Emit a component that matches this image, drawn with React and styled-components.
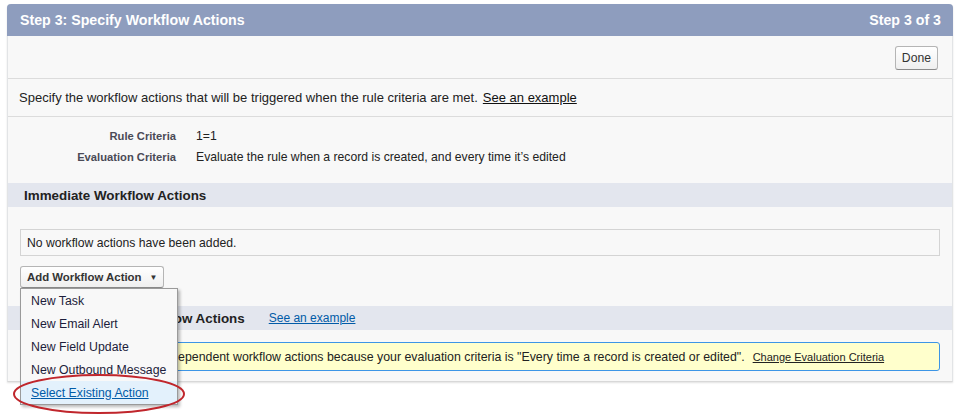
import React from "react";
import styled, { createGlobalStyle } from "styled-components";

const Global = createGlobalStyle`
  html, body { margin: 0; padding: 0; background: #fff; }
  body { font-family: "Liberation Sans", Arial, sans-serif; color: #222; }
`;

const Page = styled.div`
  min-height: 420px;
  box-sizing: border-box;
  padding: 4px 8px 0 7px;
`;

const Panel = styled.div`
  background: #f8f8f8;
  border: 1px solid #e2e4e6;
  border-top: none;
  border-bottom-color: #d8d8d8;
  border-radius: 4px 4px 0 0;
  box-shadow: 0 1px 2px rgba(0, 0, 0, 0.12);
`;

const Header = styled.div`
  height: 32px;
  margin: 0 -1px;
  padding: 0 12px 0 13px;
  display: flex;
  align-items: center;
  justify-content: space-between;
  background: #8e9dbe;
  border-radius: 4px 4px 0 0;
  color: #fff;
  font-size: 14.2px;
  font-weight: bold;
`;

const ButtonRow = styled.div`
  height: 43px;
  box-sizing: border-box;
  padding: 10px 14px 0 0;
  display: flex;
  justify-content: flex-end;
  align-items: flex-start;
  border-bottom: 1px solid #dcdcdc;
`;

const Button = styled.button`
  height: ${(p) => p.$h || 24}px;
  padding: 0 ${(p) => p.$pr || 6}px 0 6px;
  display: inline-flex;
  align-items: center;
  gap: 8px;
  font-family: inherit;
  font-size: ${(p) => (p.$bold ? 11.4 : 12.2)}px;
  font-weight: ${(p) => (p.$bold ? "bold" : "normal")};
  color: #333;
  background: linear-gradient(#ffffff, #efefef);
  border: 1px solid #b5b5b5;
  border-bottom-color: #8a8a8a;
  border-radius: 3px;
  cursor: pointer;
`;

const Intro = styled.div`
  height: 37px;
  padding-left: 11px;
  display: flex;
  align-items: center;
  border-bottom: 1px solid #dcdcdc;
  font-size: 13px;
  color: #222;
`;

const PlainLink = styled.a`
  margin-left: 5px;
  color: #111;
  text-decoration: underline;
`;

const Criteria = styled.div`
  display: grid;
  grid-template-columns: 168px 1fr;
  column-gap: 20px;
  grid-auto-rows: 21px;
  align-items: center;
  padding: 8px 0 16px;
`;

const Label = styled.div`
  text-align: right;
  font-size: 11.2px;
  font-weight: bold;
  color: #4a4a56;
`;

const Value = styled.div`
  font-size: 12.2px;
  color: #222;
`;

const SectionHeader = styled.div`
  height: 24px;
  padding-left: 16px;
  display: flex;
  align-items: center;
  gap: 24px;
  background: #e3e6ee;
  font-size: 13.4px;
  font-weight: bold;
  color: #222;
`;

const BlueLink = styled.a`
  font-size: 12px;
  font-weight: normal;
  color: #015ba7;
  text-decoration: underline;
`;

const SectionBody = styled.div`
  padding: ${(p) => p.$pad};
`;

const EmptyBox = styled.div`
  height: 27px;
  box-sizing: border-box;
  padding-left: 6px;
  display: flex;
  align-items: center;
  border: 1px solid #d4d4d4;
  font-size: 12.2px;
  color: #222;
`;

const MenuWrap = styled.div`
  position: relative;
  margin-top: 10px;
  display: inline-block;
`;

const Caret = styled.span`
  font-size: 8px;
  color: #333;
`;

const Menu = styled.ul`
  position: absolute;
  top: 100%;
  left: 0;
  z-index: 5;
  width: 158px;
  box-sizing: border-box;
  margin: 0;
  padding: 0;
  list-style: none;
  background: #f8f8f8;
  border: 1px solid #9a9a9a;
  box-shadow: 2px 2px 3px rgba(0, 0, 0, 0.28);
`;

const MenuItem = styled.li`
  height: 23px;
  padding-left: 10px;
  display: flex;
  align-items: center;
  font-size: 12.3px;
  color: ${(p) => (p.$active ? "#015ba7" : "#1d1d3b")};
  text-decoration: ${(p) => (p.$active ? "underline" : "none")};
  background: ${(p) => (p.$active ? "#e3f1fc" : "transparent")};
`;

const Ring = styled.svg`
  position: absolute;
  left: -9px;
  top: 106px;
  z-index: 6;
  pointer-events: none;
`;

const Notice = styled.div`
  height: 29px;
  box-sizing: border-box;
  padding-left: 34px;
  display: flex;
  align-items: center;
  background: #ffffcc;
  border: 1px solid #3d95e6;
  border-radius: 3px;
  font-size: 12.35px;
  color: #222;
  white-space: nowrap;
`;

const NoticeLink = styled.a`
  margin-left: 8px;
  font-size: 11px;
  color: #222;
  text-decoration: underline;
`;

const menuItems = [
  "New Task",
  "New Email Alert",
  "New Field Update",
  "New Outbound Message",
];

export default function App() {
  return (
    <Page>
      <Global />
      <Panel>
        <Header>
          <span>Step 3: Specify Workflow Actions</span>
          <span>Step 3 of 3</span>
        </Header>
        <ButtonRow>
          <Button>Done</Button>
        </ButtonRow>
        <Intro>
          Specify the workflow actions that will be triggered when the rule criteria are met.
          <PlainLink href="#">See an example</PlainLink>
        </Intro>
        <Criteria>
          <Label>Rule Criteria</Label>
          <Value>1=1</Value>
          <Label>Evaluation Criteria</Label>
          <Value>Evaluate the rule when a record is created, and every time it’s edited</Value>
        </Criteria>

        <SectionHeader>Immediate Workflow Actions</SectionHeader>
        <SectionBody $pad="22px 12px 18px 12px">
          <EmptyBox>No workflow actions have been added.</EmptyBox>
          <MenuWrap>
            <Button $bold $h={22} $pr={6}>
              Add Workflow Action <Caret>▼</Caret>
            </Button>
            <Menu>
              {menuItems.map((item) => (
                <MenuItem key={item}>{item}</MenuItem>
              ))}
              <MenuItem $active>Select Existing Action</MenuItem>
            </Menu>
            <Ring width="176" height="44" viewBox="0 0 176 44">
              <ellipse cx="88" cy="22" rx="85" ry="19" fill="none" stroke="#c0262c" strokeWidth="2" />
            </Ring>
          </MenuWrap>
        </SectionBody>

        <SectionHeader>
          Time-Dependent Workflow Actions
          <BlueLink href="#">See an example</BlueLink>
        </SectionHeader>
        <SectionBody $pad="12px 12px 10px 12px">
          <Notice>
            You cannot add time-dependent workflow actions because your evaluation criteria is "Every time a record is created or edited".
            <NoticeLink href="#">Change Evaluation Criteria</NoticeLink>
          </Notice>
        </SectionBody>
      </Panel>
    </Page>
  );
}
